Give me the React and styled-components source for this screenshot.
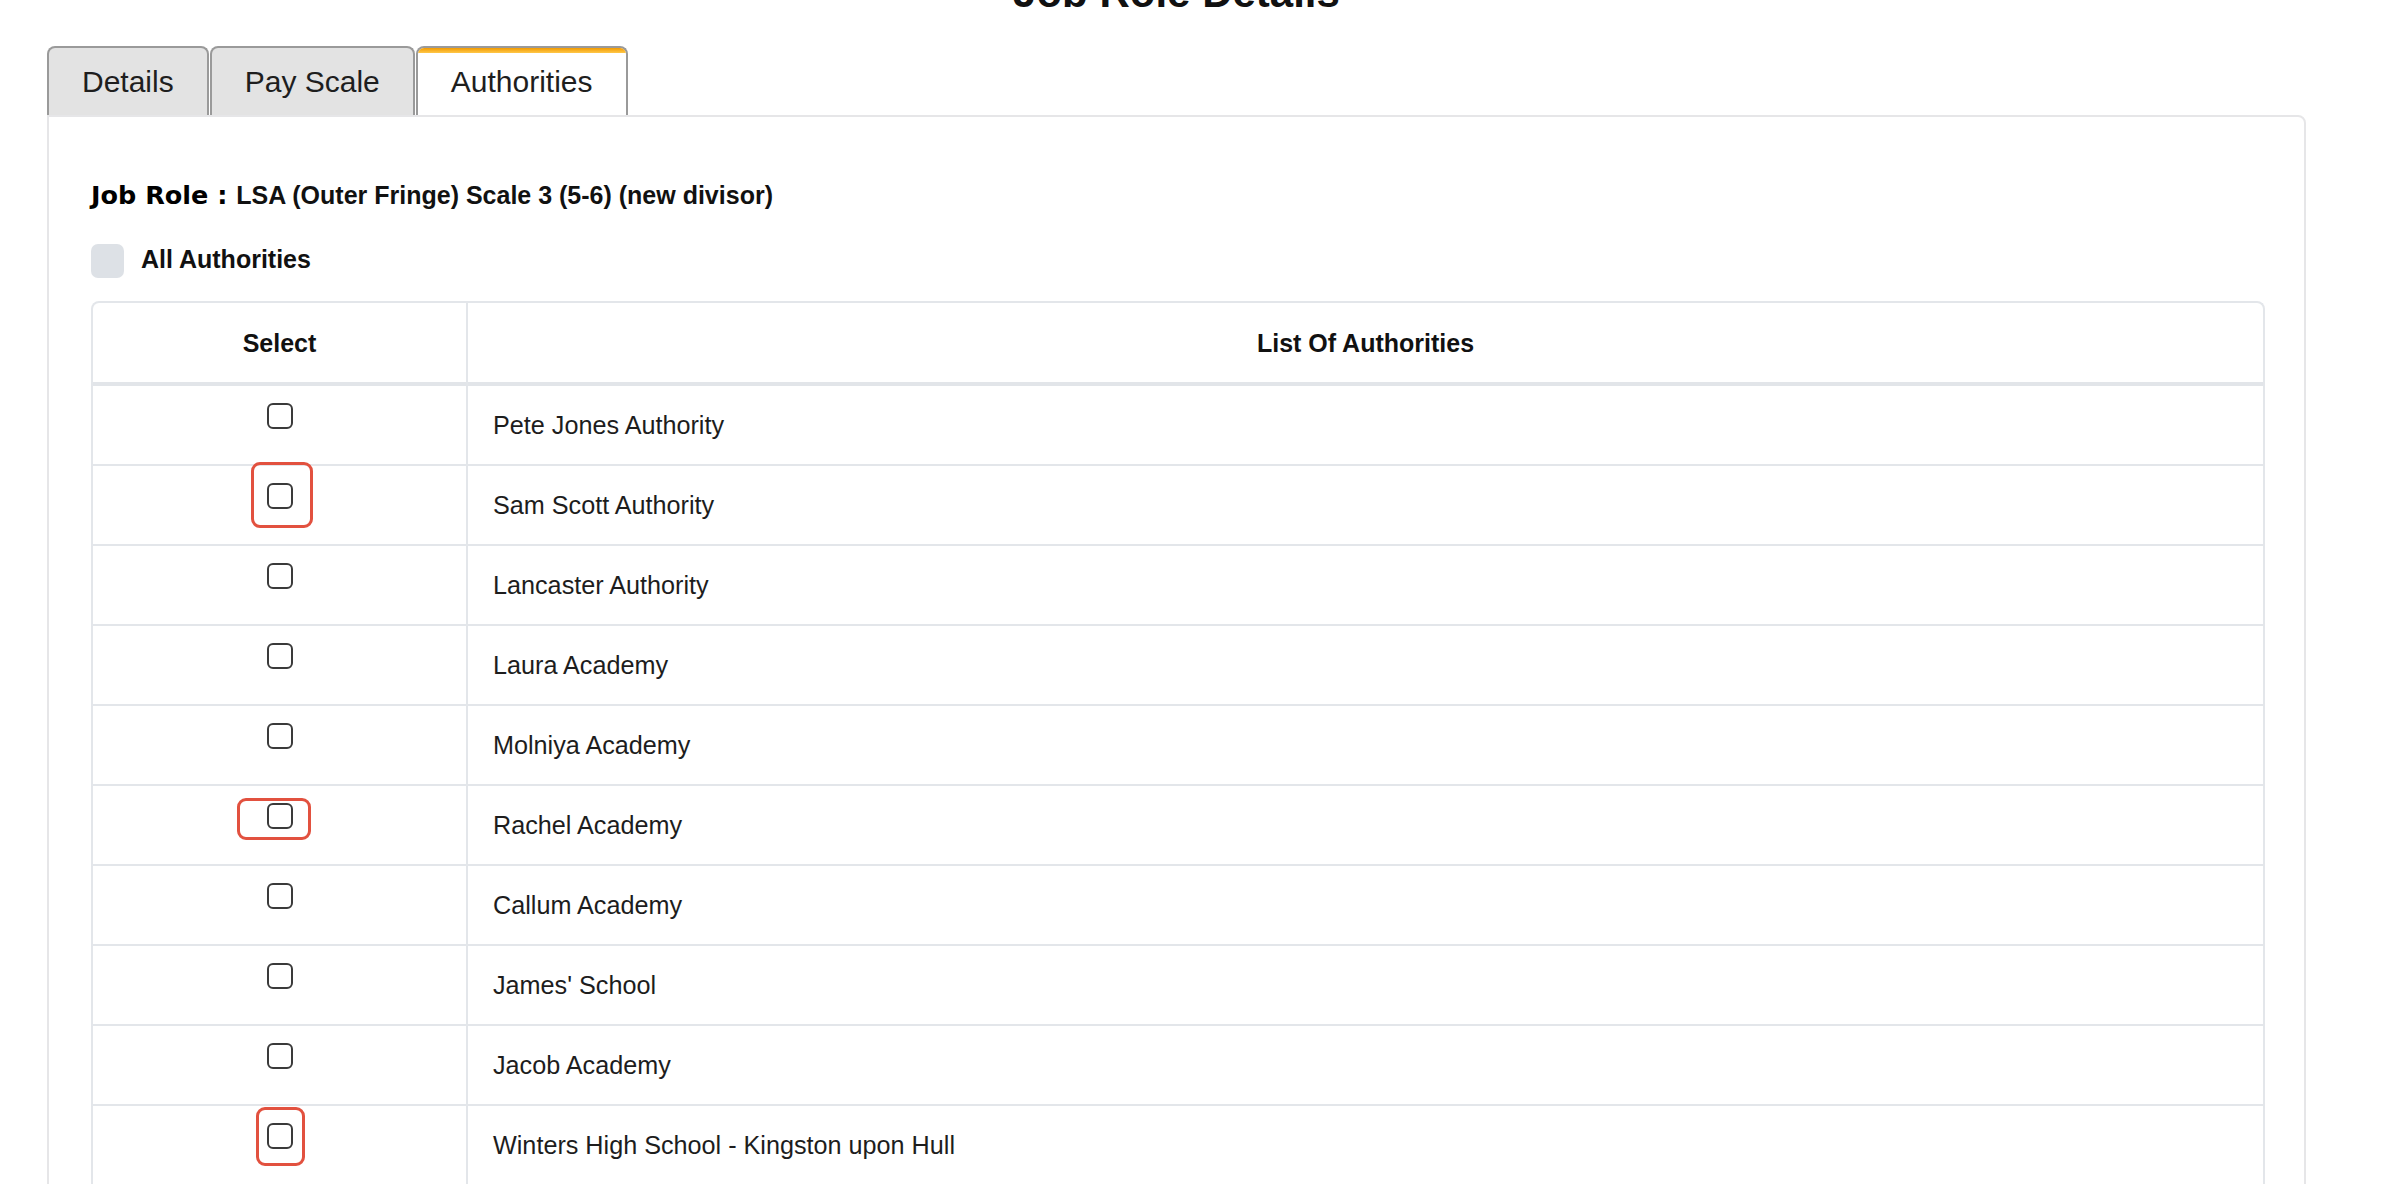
import React from 'react';
import styled, { createGlobalStyle } from 'styled-components';

const Global = createGlobalStyle`
  html, body { margin: 0; padding: 0; overflow: hidden; background: #ffffff; }
  body { font-family: "Liberation Sans", Arial, sans-serif; color: #1d1d1d; }
  * { box-sizing: border-box; }
`;

const Page = styled.div`
  width: 2403px;
  padding-left: 47px;
`;

const Column = styled.div`
  width: 2259px;
  display: flex;
  flex-direction: column;
`;

const Title = styled.h1`
  margin: -31px 0 0;
  font-size: 42px;
  line-height: 48px;
  font-weight: 700;
  text-align: center;
  color: #111;
`;

const TabBar = styled.div`
  display: flex;
  gap: 1px;
  margin-top: 29px;
  height: 69px;
`;

const Tab = styled.button`
  position: relative;
  height: 69px;
  padding: 0 33px;
  font-family: "Liberation Sans", Arial, sans-serif;
  font-size: 30px;
  color: #1e1e1e;
  background: ${p => (p.$active ? '#ffffff' : '#e3e3e3')};
  border: 2px solid #9a9a9a;
  border-bottom: none;
  border-radius: 8px 8px 0 0;
  cursor: pointer;
  overflow: hidden;
  &::before {
    content: '';
    display: ${p => (p.$active ? 'block' : 'none')};
    position: absolute;
    left: 0;
    right: 0;
    top: 0;
    height: 5px;
    background: linear-gradient(#f29a00, #ffc84a);
  }
`;

const Panel = styled.section`
  border: 2px solid #e6e6e8;
  border-radius: 0 8px 0 0;
  background: #fff;
  padding: 63px 39px 60px 42px;
`;

const RoleLine = styled.div`
  height: 30px;
  display: flex;
  align-items: baseline;
  white-space: pre;
  font-size: 25px;
  line-height: 30px;
  font-weight: 700;
  color: #111;
`;

const RoleLabel = styled.span`
  font-family: "DejaVu Sans", "Liberation Sans", sans-serif;
  font-size: 25.5px;
  font-weight: 700;
  color: #000;
`;

const AllRow = styled.label`
  display: flex;
  align-items: center;
  gap: 17px;
  margin-top: 34px;
  height: 34px;
  font-size: 25px;
  font-weight: 700;
  color: #111;
`;

const AllText = styled.span`
  line-height: 28px;
  margin-bottom: 5px;
`;

const SoftBox = styled.span`
  width: 33px;
  height: 34px;
  border-radius: 7px;
  background: #dde1e6;
`;

const Grid = styled.div`
  margin-top: 23px;
  display: grid;
  grid-template-columns: 375px 1fr;
  border: 2px solid #e3e6ea;
  border-bottom: none;
  border-radius: 8px 8px 0 0;
`;

const HeadCell = styled.div`
  height: 83px;
  display: flex;
  align-items: center;
  justify-content: center;
  padding-top: 1px;
  font-size: 25px;
  font-weight: 700;
  color: #111;
  border-bottom: 4px solid #e2e5e9;
  border-right: ${p => (p.$first ? '2px solid #e3e6ea' : 'none')};
`;

const SelectCell = styled.div`
  height: 80px;
  display: flex;
  justify-content: center;
  align-items: flex-start;
  padding-top: 17px;
  border-bottom: 2px solid #e3e6ea;
  border-right: 2px solid #e3e6ea;
`;

const NameCell = styled.div`
  height: 80px;
  display: flex;
  align-items: center;
  padding-left: 25px;
  font-size: 25.2px;
  color: #1d1d1d;
  border-bottom: 2px solid #e3e6ea;
`;

const BoxWrap = styled.span`
  position: relative;
  display: inline-flex;
`;

const Check = styled.input.attrs({ type: 'checkbox' })`
  appearance: none;
  margin: 0;
  width: 26px;
  height: 26px;
  border: 2px solid #3a3a3a;
  border-radius: 6px;
  background: #fff;
`;

const Highlight = styled.span`
  position: absolute;
  top: ${p => p.$t}px;
  right: ${p => p.$r}px;
  bottom: ${p => p.$b}px;
  left: ${p => p.$l}px;
  border: 3px solid #e2513f;
  border-radius: 9px;
  pointer-events: none;
`;

const rows = [
  { name: 'Pete Jones Authority' },
  { name: 'Sam Scott Authority', mark: [-21, -20, -19, -16] },
  { name: 'Lancaster Authority' },
  { name: 'Laura Academy' },
  { name: 'Molniya Academy' },
  { name: 'Rachel Academy', mark: [-5, -18, -11, -30] },
  { name: 'Callum Academy' },
  { name: "James' School" },
  { name: 'Jacob Academy' },
  { name: 'Winters High School - Kingston upon Hull', mark: [-16, -12, -17, -11] },
];

export default function App() {
  return (
    <Page>
      <Global />
      <Column>
        <Title>Job Role Details</Title>
        <TabBar>
          <Tab>Details</Tab>
          <Tab>Pay Scale</Tab>
          <Tab $active>Authorities</Tab>
        </TabBar>
        <Panel>
          <RoleLine>
            <RoleLabel>Job Role : </RoleLabel>
            <span>LSA (Outer Fringe) Scale 3 (5-6) (new divisor)</span>
          </RoleLine>
          <AllRow>
            <SoftBox />
            <AllText>All Authorities</AllText>
          </AllRow>
          <Grid>
            <HeadCell $first>Select</HeadCell>
            <HeadCell>List Of Authorities</HeadCell>
            {rows.map(r => (
              <React.Fragment key={r.name}>
                <SelectCell>
                  <BoxWrap>
                    <Check aria-label={r.name} />
                    {r.mark && (
                      <Highlight $t={r.mark[0]} $r={r.mark[1]} $b={r.mark[2]} $l={r.mark[3]} />
                    )}
                  </BoxWrap>
                </SelectCell>
                <NameCell>{r.name}</NameCell>
              </React.Fragment>
            ))}
          </Grid>
        </Panel>
      </Column>
    </Page>
  );
}
